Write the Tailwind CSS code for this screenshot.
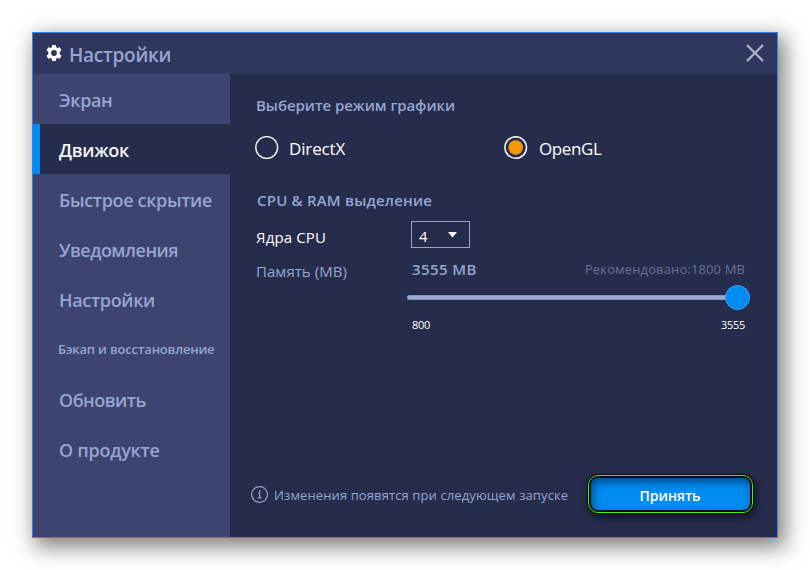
<!DOCTYPE html>
<html lang="ru">
<head>
<meta charset="utf-8">
<title>Настройки</title>
<script src="https://cdn.jsdelivr.net/npm/@tailwindcss/browser@4"></script>
</head>
<body class="h-[570px] w-[810px] overflow-hidden bg-white pl-8 pt-8 font-['Open_Sans','Noto_Sans',sans-serif] text-[#97a5d1] whitespace-nowrap">
<div class="flex h-[506px] w-[746px] flex-col border border-[#3485ea] bg-[#262c4b] shadow-[5px_7px_20px_2px_rgba(0,0,0,0.5)]">
  <header class="flex h-[41px] shrink-0 items-center bg-[#30375f] pl-[13px] pr-[13px]">
    <svg class="-mt-px h-4 w-4" viewBox="0 0 16 16" fill="#fff" fill-rule="evenodd"><path d="M6.2 0h3.600l.4 2.300 1.300.7 2.200-.8 1.800 3.100L13.700 6.800v2.400l1.800 1.500-1.800 3.100-2.200-.8-1.300.7L9.800 16H6.200l-.4-2.300-1.300-.7-2.200.8L.5 10.700l1.800-1.500V6.800L.5 5.300l1.800-3.100 2.200.8 1.300-.7zM8 5.100a2.900 2.900 0 1 0 0 5.800 2.900 2.900 0 0 0 0-5.800z"/></svg>
    <h1 class="ml-[7px] pt-[3px] text-[19px] leading-6 font-semibold tracking-[-0.25px]">Настройки</h1>
    <svg class="-mt-px ml-auto h-[18px] w-[18px]" viewBox="0 0 18 18" fill="none" stroke="#b3b6c8" stroke-width="2.200"><path d="M1 1l16 16M17 1L1 17"/></svg>
  </header>
  <div class="flex min-h-0 flex-1">
    <nav class="flex w-[197px] shrink-0 flex-col bg-[#3d446f] text-[18px] font-semibold [&>a]:flex [&>a]:h-[50px] [&>a]:items-center [&>a]:pl-[26px] [&>a]:pt-[2px]">
      <a class="tracking-[-0.35px]">Экран</a>
      <a class="bg-[#262c4b] text-[#f4f4f4] tracking-[-0.3px] shadow-[inset_7px_0_0_#008cf0]">Движок</a>
      <a class="tracking-[-0.33px]">Быстрое скрытие</a>
      <a class="tracking-[-0.5px]">Уведомления</a>
      <a class="tracking-[-0.33px]">Настройки</a>
      <a class="text-[13px] tracking-[-0.19px]"><span class="-ml-px">Бэкап и восстановление</span></a>
      <a class="tracking-[-0.5px]">Обновить</a>
      <a class="tracking-[-0.24px]">О продукте</a>
    </nav>
    <main class="flex flex-1 flex-col pl-[26px] pt-[21px]">
      <h2 class="text-[15px] leading-5 font-semibold tracking-[-0.07px]">Выберите режим графики</h2>
      <div class="mt-[21px] flex h-6 text-[17px] leading-[25px] text-white">
        <label class="flex w-[249px]"><svg class="-ml-[1.500px] mr-[10.500px] h-6 w-6" viewBox="0 0 24 24"><circle cx="11.700" cy="11.500" r="10.900" fill="none" stroke="#f2f2f4" stroke-width="1.400"/></svg><span class="tracking-[-0.13px]">DirectX</span></label>
        <label class="flex"><svg class="-ml-px mr-[11px] h-6 w-6" viewBox="0 0 24 24"><circle cx="11.700" cy="11.500" r="10.800" fill="none" stroke="#f2f2f4" stroke-width="1.500"/><circle cx="11.700" cy="11.500" r="7.300" fill="#f39800"/></svg><span class="tracking-[-0.4px]">OpenGL</span></label>
      </div>
      <h2 class="mt-[30px] pl-px text-[15px] leading-5 font-semibold tracking-[0.2px]">CPU &amp; RAM выделение</h2>
      <div class="mt-[11px] flex h-[27px] text-[15px] text-white">
        <span class="w-[155px] pt-[6px] leading-5 tracking-[0.15px]">Ядра CPU</span>
        <div class="flex w-[59px] justify-between border border-[#97a5d1] pl-[7px] pr-3"><span class="pt-[4px] leading-5">4</span><svg class="mt-[10px] h-[6px] w-[9px]" viewBox="0 0 9 6" fill="#fff"><path d="M0 0h9L4.500 5.500z"/></svg></div>
      </div>
      <div class="mt-[13px] flex h-5 text-[15px] leading-5">
        <span class="w-[156px] tracking-[0.05px]">Память (MB)</span>
        <span class="-mt-[2px] font-semibold tracking-[0.4px]">3555 MB</span>
        <span class="-mt-[2px] ml-auto mr-[32px] text-[13px] tracking-[0.13px] text-[#67709a]">Рекомендовано:1800 MB</span>
      </div>
      <div class="ml-[151px] mt-1 flex h-[25px] items-center">
        <div class="h-[5px] w-[330px] rounded-full border-y border-[#8591bd] bg-[#9ba8d4]"></div>
        <div class="-ml-3 h-[25px] w-[25px] rounded-full border border-[#3aa4f0] bg-[#008cf0]"></div>
      </div>
      <div class="ml-[156px] mr-[32px] mt-[7px] flex justify-between text-[11px] leading-4 tracking-[-0.3px] text-white"><span>800</span><span>3555</span></div>
      <footer class="mt-auto mb-[23px] flex h-10 items-center">
        <svg class="-ml-[5px] h-[17px] w-[17px]" viewBox="0 0 17 17" fill="none" stroke="#97a5d1" stroke-width="1.200"><circle cx="8.500" cy="8.500" r="7.900"/><path d="M7 7.200h1.700v4.300M6.800 11.900h3.600"/><path stroke-width="1.600" d="M7.900 4.900h1.500"/></svg>
        <span class="ml-[6px] pt-[2px] text-[13px] leading-5 tracking-[0.11px]">Изменения появятся при следующем запуске</span>
        <button class="ml-auto mr-[23px] flex h-10 w-[167px] rounded-[11px] bg-[#080c18] p-px text-white shadow-[2px_4px_8px_rgba(0,0,0,0.5)]"><span class="flex h-[38px] w-full rounded-[10px] border border-[#4cf00a] p-px"><span class="flex flex-1 items-center justify-center rounded-[8px] border border-[#080c18] bg-[#008cf0] pt-[2px] pr-px text-[14px] font-semibold tracking-[-0.05px] shadow-[inset_2px_4px_8px_rgba(0,20,60,0.55)]">Принять</span></span></button>
      </footer>
    </main>
  </div>
</div>
</body>
</html>
